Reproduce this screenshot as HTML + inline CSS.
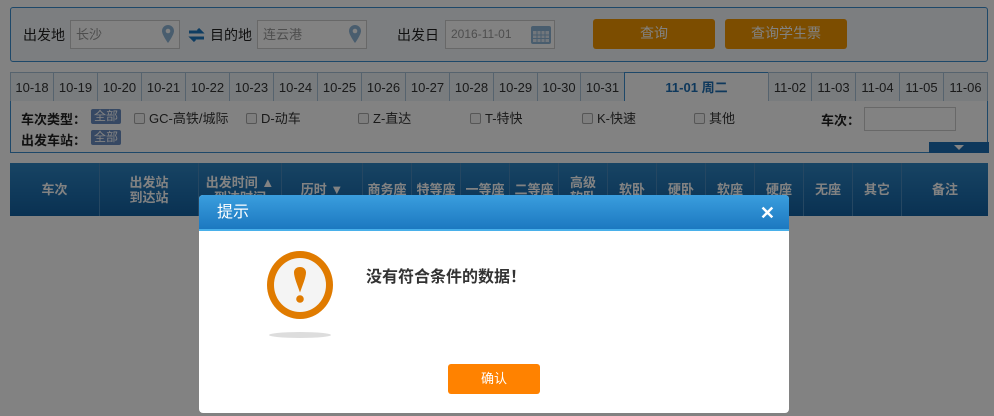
<!DOCTYPE html>
<html><head><meta charset="utf-8"><style>
*{margin:0;padding:0;box-sizing:border-box}
body{width:994px;height:416px;position:relative;overflow:hidden;background:#fff;font-family:"Liberation Sans","Noto Sans CJK SC",sans-serif;font-size:13px;color:#333}
.abs{position:absolute}
.search{left:10px;top:7px;width:978px;height:55px;border:1px solid #3b8ecf;border-radius:3px;background:#f4f7fb}
.lbl{font-size:14px;color:#222}
.inp{border:1px solid #ccc;background:#fff;height:29px;color:#999;font-size:13px;line-height:27px;padding-left:5px}
.btn{background:#f39800;color:#fff;font-size:14px;text-align:center;line-height:29px;border-radius:3px;height:30px}
.tabs{left:10px;top:72px;height:30px}
.tab{position:absolute;top:0;height:30px;border:1px solid #a9c3d8;background:#eef3f8;font-size:13px;text-align:center;line-height:29px;color:#333}
.filter{left:10px;top:101px;width:978px;height:52px;border:1px solid #3b8ecf;border-top:none;background:#fff}
.cb{display:inline-block;width:11px;height:11px;border:1px solid #aaa;border-radius:2px;vertical-align:-1px;margin-right:4px;background:#f8f8f8}
.tag{display:inline-block;background:#6b8dc3;color:#fff;font-size:12px;padding:0 3px;line-height:15px;border-radius:2px}
.thead{left:10px;top:163px;width:978px;height:53px;background:linear-gradient(#2f86c4,#1361a2);color:#fff;font-weight:bold;font-size:13px}
.th{position:absolute;top:0;height:53px;display:flex;align-items:center;justify-content:center;text-align:center;line-height:15px;border-right:1px solid #4a8cc0}
.ov{left:0;top:0;width:994px;height:416px;background:rgba(0,0,0,.49)}
.dlg{left:199px;top:195px;width:590px;height:218px;background:#fff;border-radius:4px;overflow:hidden}
.dt{height:36px;background:linear-gradient(#3a9ede,#1c78c0);border-bottom:2px solid #49b0ea;color:#fff;font-size:16px;line-height:36px;padding-left:18px}
</style></head><body>
<div class="abs search">
 <span class="abs lbl" style="left:12px;top:17px">出发地</span>
 <div class="abs inp" style="left:59px;top:12px;width:110px">长沙</div>
 <svg class="abs" style="left:151px;top:17px" width="12" height="18"><path d="M6 0C2.7 0 0 2.6 0 6c0 4 6 12 6 12s6-8 6-12C12 2.6 9.3 0 6 0z" fill="#8fb7d8"/><circle cx="6" cy="6" r="2.3" fill="#fff"/></svg>
 <svg class="abs" style="left:177px;top:20px" width="17" height="14"><path d="M1 4h12l-3-3M16 10H4l3 3" stroke="#1d78c1" stroke-width="3" fill="none"/></svg>
 <span class="abs lbl" style="left:199px;top:17px">目的地</span>
 <div class="abs inp" style="left:246px;top:12px;width:110px">连云港</div>
 <svg class="abs" style="left:338px;top:17px" width="12" height="18"><path d="M6 0C2.7 0 0 2.6 0 6c0 4 6 12 6 12s6-8 6-12C12 2.6 9.3 0 6 0z" fill="#8fb7d8"/><circle cx="6" cy="6" r="2.3" fill="#fff"/></svg>
 <span class="abs lbl" style="left:386px;top:17px">出发日</span>
 <div class="abs inp" style="left:434px;top:12px;width:110px;font-size:12px">2016-11-01</div>
 <svg class="abs" style="left:520px;top:16px" width="20" height="20"><rect x="0" y="2" width="20" height="18" rx="2" fill="#8fb7d8"/><rect x="2" y="7" width="16" height="11" fill="#dfeaf4"/><path d="M2 11h16M2 14.5h16M6 7v11M10 7v11M14 7v11" stroke="#8fb7d8"/></svg>
 <div class="abs btn" style="left:582px;top:11px;width:122px">查询</div>
 <div class="abs btn" style="left:714px;top:11px;width:122px">查询学生票</div>
</div>
<div class="abs tabs">
 <div class="tab" style="left:0;width:44px">10-18</div>
 <div class="tab" style="left:43px;width:45px">10-19</div>
 <div class="tab" style="left:87px;width:45px">10-20</div>
 <div class="tab" style="left:131px;width:45px">10-21</div>
 <div class="tab" style="left:175px;width:45px">10-22</div>
 <div class="tab" style="left:219px;width:45px">10-23</div>
 <div class="tab" style="left:263px;width:45px">10-24</div>
 <div class="tab" style="left:307px;width:45px">10-25</div>
 <div class="tab" style="left:351px;width:45px">10-26</div>
 <div class="tab" style="left:395px;width:45px">10-27</div>
 <div class="tab" style="left:439px;width:45px">10-28</div>
 <div class="tab" style="left:483px;width:45px">10-29</div>
 <div class="tab" style="left:527px;width:44px">10-30</div>
 <div class="tab" style="left:570px;width:45px">10-31</div>
 <div class="tab" style="left:614px;width:145px;background:#fff;border-color:#3b8ecf;border-bottom:none;color:#1d6fb5;font-weight:bold">11-01 周二</div>
 <div class="tab" style="left:758px;width:44px">11-02</div>
 <div class="tab" style="left:801px;width:45px">11-03</div>
 <div class="tab" style="left:845px;width:45px">11-04</div>
 <div class="tab" style="left:889px;width:45px">11-05</div>
 <div class="tab" style="left:933px;width:45px">11-06</div>
</div>
<div class="abs filter">
 <span class="abs" style="left:10px;top:8px;font-weight:bold;color:#222">车次类型：</span>
 <span class="abs tag" style="left:80px;top:8px">全部</span>
 <span class="abs" style="left:123px;top:7px"><i class="cb"></i>GC-高铁/城际</span>
 <span class="abs" style="left:235px;top:7px"><i class="cb"></i>D-动车</span>
 <span class="abs" style="left:347px;top:7px"><i class="cb"></i>Z-直达</span>
 <span class="abs" style="left:459px;top:7px"><i class="cb"></i>T-特快</span>
 <span class="abs" style="left:571px;top:7px"><i class="cb"></i>K-快速</span>
 <span class="abs" style="left:683px;top:7px"><i class="cb"></i>其他</span>
 <span class="abs" style="left:810px;top:9px;font-weight:bold;color:#222">车次：</span>
 <div class="abs" style="left:853px;top:6px;width:92px;height:24px;border:1px solid #ccc"></div>
 <span class="abs" style="left:10px;top:29px;font-weight:bold;color:#222">出发车站：</span>
 <span class="abs tag" style="left:80px;top:29px">全部</span>
 <div class="abs" style="left:918px;top:41px;width:60px;height:11px;background:#1d6fb5"><div style="margin:3px auto 0;width:0;height:0;border-left:5px solid transparent;border-right:5px solid transparent;border-top:5px solid #fff"></div></div>
</div>
<div class="abs thead">
 <div class="th" style="left:0;width:90px">车次</div>
 <div class="th" style="left:90px;width:99px">出发站<br>到达站</div>
 <div class="th" style="left:189px;width:83px">出发时间 ▲<br>到达时间</div>
 <div class="th" style="left:272px;width:81px">历时 ▼</div>
 <div class="th" style="left:353px;width:49px">商务座</div>
 <div class="th" style="left:402px;width:49px">特等座</div>
 <div class="th" style="left:451px;width:49px">一等座</div>
 <div class="th" style="left:500px;width:49px">二等座</div>
 <div class="th" style="left:549px;width:49px">高级<br>软卧</div>
 <div class="th" style="left:598px;width:49px">软卧</div>
 <div class="th" style="left:647px;width:49px">硬卧</div>
 <div class="th" style="left:696px;width:49px">软座</div>
 <div class="th" style="left:745px;width:49px">硬座</div>
 <div class="th" style="left:794px;width:49px">无座</div>
 <div class="th" style="left:843px;width:49px">其它</div>
 <div class="th" style="left:892px;width:86px;border:none">备注</div>
</div>
<div class="abs ov"></div>
<div class="abs dlg">
 <div class="dt">提示<span style="position:absolute;right:14px;top:0;font-size:18px;font-weight:bold">✕</span></div>
 <svg class="abs" style="left:66px;top:56px" width="70" height="90"><ellipse cx="35" cy="84" rx="31" ry="3" fill="#ddd"/><ellipse cx="35" cy="34" rx="33" ry="34" fill="#e07b00"/><ellipse cx="35" cy="34" rx="26" ry="27" fill="#f4f4f4"/><path d="M35 16c-3.5 0-6 2.3-6 5.5 0 4.5 3.5 13 6 20 2.5-7 6-15.5 6-20 0-3.2-2.5-5.5-6-5.5z" fill="#e07b00"/><circle cx="35" cy="48" r="3.8" fill="#e07b00"/></svg>
 <div class="abs" style="left:167px;top:68px;font-size:16px;font-weight:bold;color:#333">没有符合条件的数据！</div>
 <div class="abs btn" style="left:249px;top:169px;width:92px;background:#ff8200;font-size:13px;line-height:30px">确认</div>
</div>
</body></html>
